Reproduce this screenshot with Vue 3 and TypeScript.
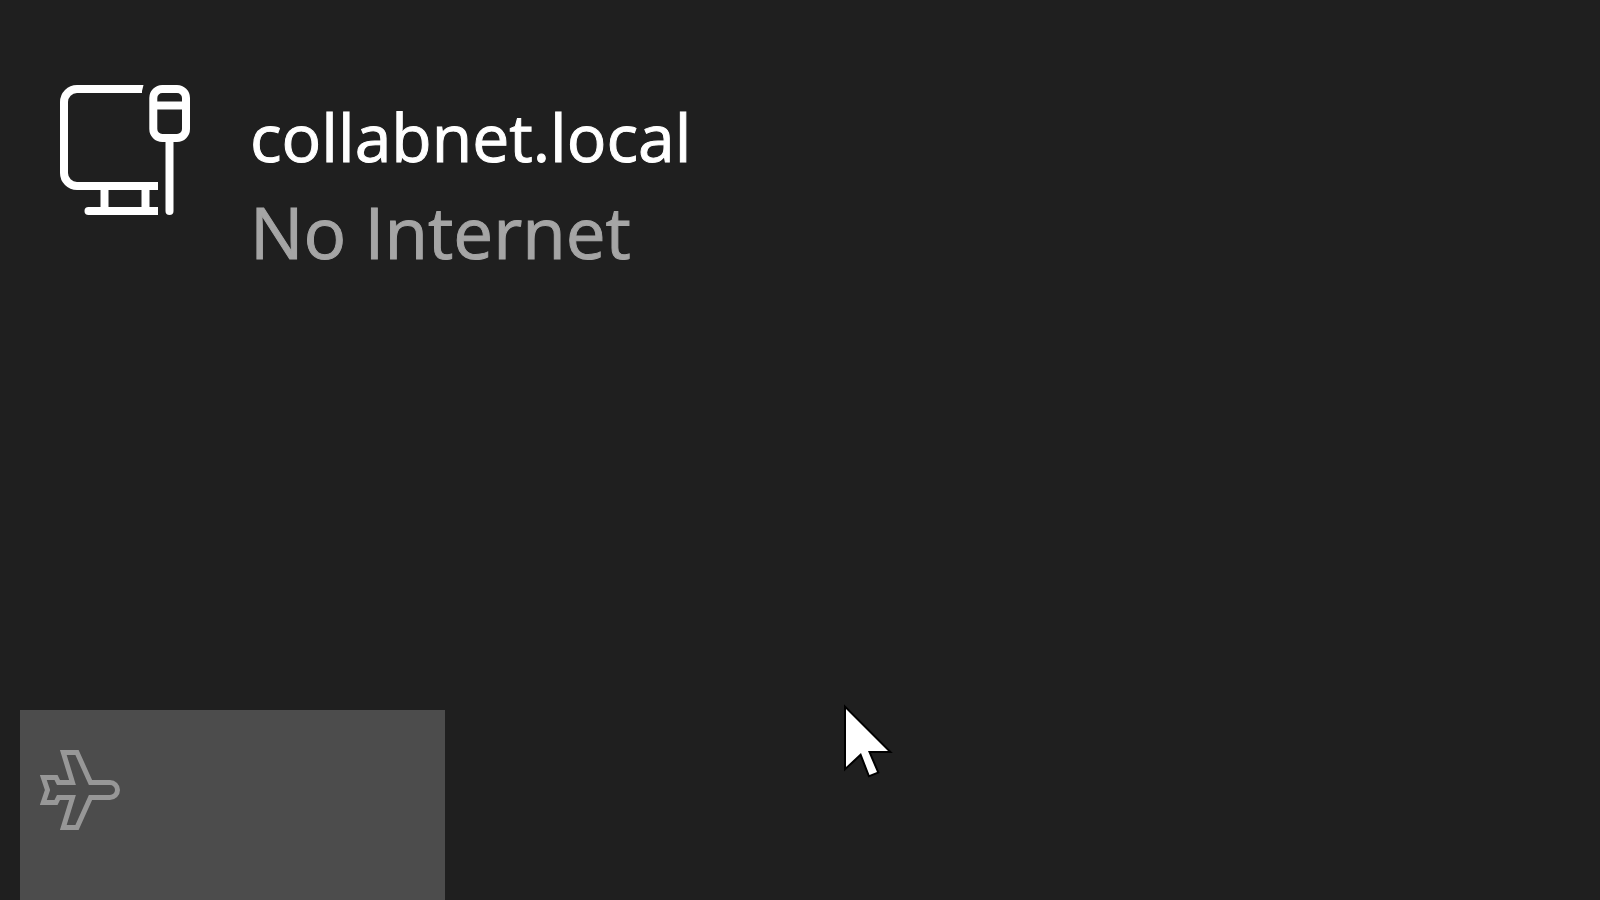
<script setup lang="ts">
interface Network {
  name: string
  status: string
}

const network: Network = { name: 'collabnet.local', status: 'No Internet' }
</script>

<template>
  <main class="flyout">
    <button class="network" type="button">
      <svg class="network-icon" viewBox="0 0 130 130" fill="none" stroke="currentColor" stroke-width="8" aria-hidden="true">
        <path d="M82 4H17A13 13 0 0 0 4 17V88A13 13 0 0 0 17 101H98" />
        <path d="M81 0H83.500L81.500 8H79Z" fill="currentColor" stroke="none" />
        <path d="M44.500 101V126M85.500 101V126" />
        <path d="M98 122H28.500A4 4 0 0 0 28.500 130H98Z" fill="currentColor" stroke="none" />
        <rect x="93.300" y="4" width="32.700" height="49" rx="9" />
        <path d="M94 20.500H126" />
        <path d="M109.500 54V126" stroke-linecap="round" />
      </svg>
      <span class="labels">
        <span class="name">{{ network.name }}</span>
        <span class="status">{{ network.status }}</span>
      </span>
    </button>

    <button class="tile" type="button" aria-label="Airplane mode">
      <svg class="plane" viewBox="0 0 80 80" fill="none" stroke="currentColor" stroke-width="5" aria-hidden="true">
        <path d="M3.300 27.500H16L18.500 32.500H32.500L23.300 2.500H37L50.500 32.500H70A7.500 7.500 0 0 1 70 47.500H50.500L37 77.500H23.300L32.500 47.500H18.500L16 52.500H3.300L7.500 40Z" />
      </svg>
    </button>

    <svg class="pointer" viewBox="0 0 52 76" aria-hidden="true">
      <path d="M5 7V65L20 51L28.500 73L36 70L27 49H47Z" fill="#fff" stroke="#000" stroke-width="4" paint-order="stroke" />
    </svg>
  </main>
</template>

<style>
body {
  margin: 0;
  background: #1f1f1f;
}
</style>

<style scoped>
.flyout {
  position: relative;
  display: flex;
  flex-direction: column;
  justify-content: space-between;
  min-height: 100vh;
  background: #1f1f1f;
  font-family: "Segoe UI", "Open Sans", "Noto Sans", sans-serif;
}

button {
  border: 0;
  border-radius: 0;
  font: inherit;
  text-align: left;
}

.network {
  display: flex;
  align-items: flex-start;
  gap: 60px;
  padding: 85px 60px 0;
  background: none;
  color: #fff;
}

.network-icon {
  flex: none;
  width: 130px;
  height: 130px;
}

.labels {
  display: flex;
  flex-direction: column;
  white-space: nowrap;
  -webkit-text-stroke: 1px currentColor;
}

.name {
  font-size: 66px;
  line-height: 102px;
}

.status {
  color: #a5a5a5;
  font-size: 71px;
  line-height: 90px;
  -webkit-text-stroke-color: #a5a5a5;
}

.tile {
  display: flex;
  align-items: flex-start;
  width: 425px;
  height: 190px;
  margin-left: 20px;
  padding: 40px 20px;
  background: #4c4c4c;
  color: #979797;
}

.plane {
  width: 80px;
  height: 80px;
}

.pointer {
  position: absolute;
  left: 841px;
  top: 702px;
  width: 52px;
  height: 76px;
  pointer-events: none;
}
</style>
